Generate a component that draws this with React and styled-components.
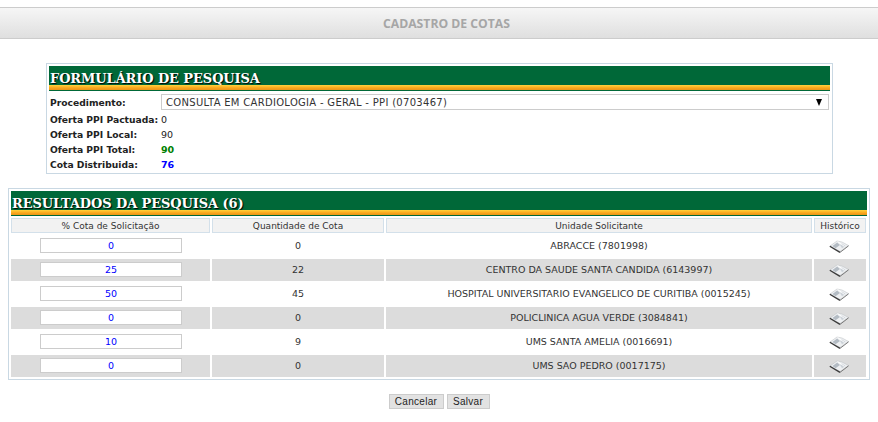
import React from 'react';
import styled, { createGlobalStyle } from 'styled-components';

const Global = createGlobalStyle`
  html, body { margin: 0; padding: 0; background: #fff; }
  body { font-family: "DejaVu Sans", Verdana, sans-serif; font-size: 10px; color: #222; }
`;
const Page = styled.div`
  width: 878px; height: 422px; padding-top: 7px; box-sizing: border-box; overflow: hidden;
`;
const TopBar = styled.header`
  height: 32px; box-sizing: border-box; border-top: 1px solid #ccc; border-bottom: 1px solid #ccc;
  background: linear-gradient(#f6f6f6, #dfdfdf);
  display: flex; align-items: center; justify-content: center;
  font: bold 12.2px "Open Sans", sans-serif; color: #a6a6a6; padding-left: 15px;
`;
const Panel = styled.section`
  box-sizing: border-box; border: 1px solid #c9d8e3; padding: 2px;
  margin: ${p => p.$margin}; width: ${p => p.$width}px; height: ${p => p.$height}px;
`;
const Banner = styled.h2`
  margin: 0; height: 25px; box-sizing: border-box; background: #006838; padding: 5px 0 0 1px;
  font: bold 13px/15px "DejaVu Serif", serif; letter-spacing: -0.1px; color: #fff; text-shadow: 1px 1px 1px #000;
  position: relative;
  &::after {
    content: ""; position: absolute; left: 0; right: 0; bottom: 1px; height: 5px;
    background: linear-gradient(#ffd23c, #f9a51c 60%, #e8961a);
  }
`;
const FormGrid = styled.div`
  display: grid; grid-template-columns: 111px 1fr; grid-template-rows: 18px repeat(4, 15px);
  padding: 3px 1px 0 1px; align-items: center;
`;
const Label = styled.div`font-weight: bold; font-size: 9.2px; white-space: nowrap; color: #222;`;
const Value = styled.div`
  font-weight: ${p => (p.$color ? 'bold' : 'normal')}; color: ${p => p.$color || '#222'}; font-size: 9.5px;
`;
const SelectRow = styled.div`
  grid-column: 1 / -1; display: grid; grid-template-columns: 111px 1fr; align-items: center; height: 18px; padding-bottom: 2px; box-sizing: border-box;
`;
const SelectBox = styled.div`
  height: 16px; box-sizing: border-box; border: 1px solid #ccc;
  display: flex; align-items: center; justify-content: space-between; padding: 0 4px;
  letter-spacing: 0.3px; color: #333; width: 668px;
`;
const Arrow = styled.span`
  width: 0; height: 0; border-left: 3.5px solid transparent; border-right: 3.5px solid transparent;
  border-top: 7px solid #000; margin-right: 2px;
`;
const Table = styled.table`
  width: 859px; table-layout: fixed; border-collapse: separate; border-spacing: 2px; margin-left: -2px;
`;
const Th = styled.th`
  height: 15px; padding: 0; font-weight: normal; text-align: center; color: #333; font-size: 9px;
  background: #f2f2f2; border: 1px solid #d3e0ea; box-sizing: border-box;
`;
const Td = styled.td`
  height: 22px; box-sizing: border-box; padding: 0 0 1px; text-align: center; font-size: 9.5px; color: #333;
  background: ${p => (p.$alt ? '#dcdcdc' : '#fff')};
`;
const PctInput = styled.div`
  width: 142px; height: 15px; box-sizing: border-box; margin: 0 auto 0 29px; background: #fff; border: 1px solid #ccc;
  color: #00f; line-height: 13px; font-size: 9.5px; text-align: center;
`;
const Actions = styled.div`
  display: flex; justify-content: center; gap: 3px; margin-top: 14px;
`;
const Btn = styled.button`
  height: 15px; padding: 0; width: ${p => p.$w}px; border: 1px solid #ccc; background: #e2e2e2;
  font: 10px "Liberation Sans", Arial, sans-serif; color: #222; letter-spacing: 0.3px;
`;
const BookSvg = styled.svg`display: block; margin: 1px auto 0 15px;`;

const Book = () => (
  <BookSvg width="20" height="13" viewBox="0 0 20 13">
    <path d="M1 6 L8 1 L13 2 L19.5 5.5 L11 11.5 Z" fill="#eef0f2" stroke="#b9bcc0" strokeWidth="0.5" />
    <path d="M3.5 6 L8.2 2.5 L11 5 L6.5 8.2 Z" fill="#b4bcc4" />
    <path d="M11 5 L13 3.6 L16.5 6 L13 8.2 Z" fill="#ccd2d8" />
    <path d="M8.5 1.4 L15.5 6.5" fill="none" stroke="#ffffff" strokeWidth="0.9" />
    <path d="M0.8 6.2 L11 12.4" fill="none" stroke="#3a3a3a" strokeWidth="1.3" />
    <path d="M11 12.4 L19.6 5.8" fill="none" stroke="#6d6d6d" strokeWidth="0.9" />
  </BookSvg>
);

const rows = [
  ['0', '0', 'ABRACCE (7801998)'],
  ['25', '22', 'CENTRO DA SAUDE SANTA CANDIDA (6143997)'],
  ['50', '45', 'HOSPITAL UNIVERSITARIO EVANGELICO DE CURITIBA (0015245)'],
  ['0', '0', 'POLICLINICA AGUA VERDE (3084841)'],
  ['10', '9', 'UMS SANTA AMELIA (0016691)'],
  ['0', '0', 'UMS SAO PEDRO (0017175)'],
];

export default function App() {
  return (
    <Page>
      <Global />
      <TopBar>CADASTRO DE COTAS</TopBar>
      <Panel $margin="24px 0 0 46px" $width={787} $height={111}>
        <Banner>FORMULÁRIO DE PESQUISA</Banner>
        <FormGrid>
          <SelectRow>
            <Label>Procedimento:</Label>
            <SelectBox>CONSULTA EM CARDIOLOGIA - GERAL - PPI (0703467)<Arrow /></SelectBox>
          </SelectRow>
          <Label>Oferta PPI Pactuada:</Label><Value>0</Value>
          <Label>Oferta PPI Local:</Label><Value>90</Value>
          <Label>Oferta PPI Total:</Label><Value $color="#008000">90</Value>
          <Label>Cota Distribuida:</Label><Value $color="#0000ff">76</Value>
        </FormGrid>
      </Panel>
      <Panel $margin="14px 0 0 8px" $width={862} $height={192}>
        <Banner>RESULTADOS DA PESQUISA (6)</Banner>
        <Table>
          <colgroup>
            <col style={{ width: 199 }} /><col style={{ width: 172 }} /><col style={{ width: 426 }} /><col style={{ width: 52 }} />
          </colgroup>
          <thead>
            <tr>
              <Th>% Cota de Solicitação</Th><Th>Quantidade de Cota</Th><Th>Unidade Solicitante</Th><Th>Histórico</Th>
            </tr>
          </thead>
          <tbody>
            {rows.map((r, i) => (
              <tr key={i}>
                <Td $alt={i % 2 === 1}><PctInput>{r[0]}</PctInput></Td>
                <Td $alt={i % 2 === 1}>{r[1]}</Td>
                <Td $alt={i % 2 === 1}>{r[2]}</Td>
                <Td $alt={i % 2 === 1}><Book /></Td>
              </tr>
            ))}
          </tbody>
        </Table>
      </Panel>
      <Actions>
        <Btn $w={55}>Cancelar</Btn>
        <Btn $w={43}>Salvar</Btn>
      </Actions>
    </Page>
  );
}
